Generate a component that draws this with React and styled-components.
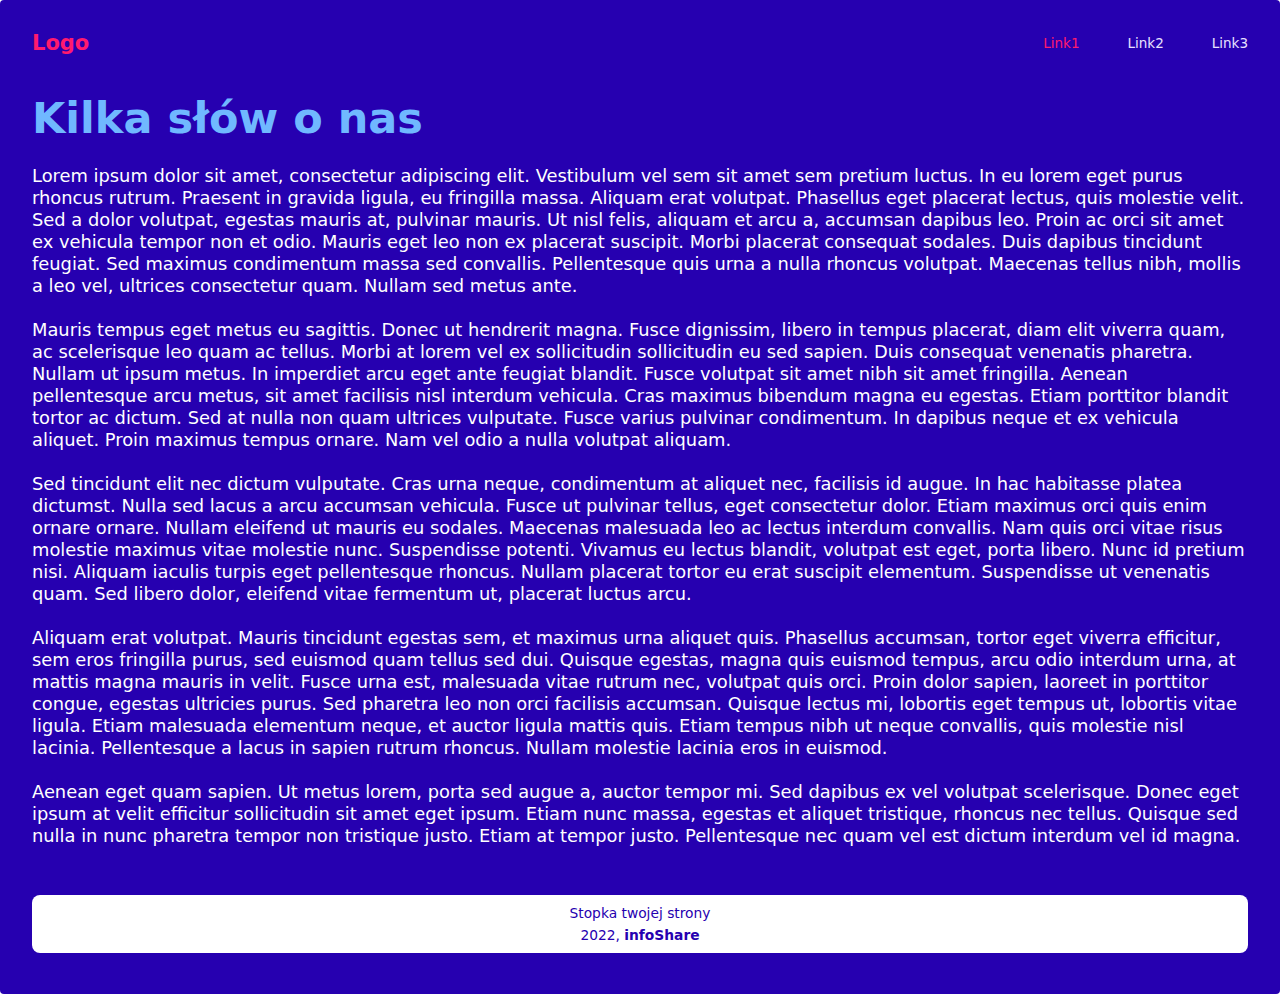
import styled, { createGlobalStyle } from "styled-components"

const GlobalStyle = createGlobalStyle`
  html, body {
    margin: 0;
    padding: 0;
    background: #ffffff;
  }

  body {
    font-family: "DejaVu Sans", "Open Sans", sans-serif;
  }

  * {
    box-sizing: border-box;
  }
`

const Page = styled.div`
  min-height: 994px;
  background: #2600b0;
  border-radius: 4px;
  padding: 0 32px 41px;
  display: flex;
  flex-direction: column;
`

const Header = styled.header`
  display: flex;
  justify-content: space-between;
  align-items: center;
  height: 86px;
`

const Logo = styled.a`
  color: #ff1a6e;
  font-size: 21px;
  font-weight: 700;
  text-decoration: none;
`

const Nav = styled.nav`
  display: flex;
  gap: 48px;
`

const NavLink = styled.a`
  color: ${(p) => (p.$active ? "#ff1a6e" : "#e6e0ff")};
  font-size: 13.5px;
  text-decoration: none;
`

const Main = styled.main`
  flex: 1;
`

const Title = styled.h1`
  margin: 0 0 15px;
  color: #70b8ff;
  font-size: 43px;
  font-weight: 700;
  line-height: 64px;
`

const Paragraph = styled.p`
  margin: 0 0 22px;
  color: #ffffff;
  font-size: 17.85px;
  line-height: 22px;
`

const Footer = styled.footer`
  margin-top: 26px;
  background: #ffffff;
  border-radius: 8px;
  padding: 7px 16px;
  text-align: center;
  color: #2600b0;
  font-size: 13.8px;
  line-height: 22px;

  strong {
    font-weight: 700;
  }
`

const paragraphs = [
  "Lorem ipsum dolor sit amet, consectetur adipiscing elit. Vestibulum vel sem sit amet sem pretium luctus. In eu lorem eget purus rhoncus rutrum. Praesent in gravida ligula, eu fringilla massa. Aliquam erat volutpat. Phasellus eget placerat lectus, quis molestie velit. Sed a dolor volutpat, egestas mauris at, pulvinar mauris. Ut nisl felis, aliquam et arcu a, accumsan dapibus leo. Proin ac orci sit amet ex vehicula tempor non et odio. Mauris eget leo non ex placerat suscipit. Morbi placerat consequat sodales. Duis dapibus tincidunt feugiat. Sed maximus condimentum massa sed convallis. Pellentesque quis urna a nulla rhoncus volutpat. Maecenas tellus nibh, mollis a leo vel, ultrices consectetur quam. Nullam sed metus ante.",
  "Mauris tempus eget metus eu sagittis. Donec ut hendrerit magna. Fusce dignissim, libero in tempus placerat, diam elit viverra quam, ac scelerisque leo quam ac tellus. Morbi at lorem vel ex sollicitudin sollicitudin eu sed sapien. Duis consequat venenatis pharetra. Nullam ut ipsum metus. In imperdiet arcu eget ante feugiat blandit. Fusce volutpat sit amet nibh sit amet fringilla. Aenean pellentesque arcu metus, sit amet facilisis nisl interdum vehicula. Cras maximus bibendum magna eu egestas. Etiam porttitor blandit tortor ac dictum. Sed at nulla non quam ultrices vulputate. Fusce varius pulvinar condimentum. In dapibus neque et ex vehicula aliquet. Proin maximus tempus ornare. Nam vel odio a nulla volutpat aliquam.",
  "Sed tincidunt elit nec dictum vulputate. Cras urna neque, condimentum at aliquet nec, facilisis id augue. In hac habitasse platea dictumst. Nulla sed lacus a arcu accumsan vehicula. Fusce ut pulvinar tellus, eget consectetur dolor. Etiam maximus orci quis enim ornare ornare. Nullam eleifend ut mauris eu sodales. Maecenas malesuada leo ac lectus interdum convallis. Nam quis orci vitae risus molestie maximus vitae molestie nunc. Suspendisse potenti. Vivamus eu lectus blandit, volutpat est eget, porta libero. Nunc id pretium nisi. Aliquam iaculis turpis eget pellentesque rhoncus. Nullam placerat tortor eu erat suscipit elementum. Suspendisse ut venenatis quam. Sed libero dolor, eleifend vitae fermentum ut, placerat luctus arcu.",
  "Aliquam erat volutpat. Mauris tincidunt egestas sem, et maximus urna aliquet quis. Phasellus accumsan, tortor eget viverra efficitur, sem eros fringilla purus, sed euismod quam tellus sed dui. Quisque egestas, magna quis euismod tempus, arcu odio interdum urna, at mattis magna mauris in velit. Fusce urna est, malesuada vitae rutrum nec, volutpat quis orci. Proin dolor sapien, laoreet in porttitor congue, egestas ultricies purus. Sed pharetra leo non orci facilisis accumsan. Quisque lectus mi, lobortis eget tempus ut, lobortis vitae ligula. Etiam malesuada elementum neque, et auctor ligula mattis quis. Etiam tempus nibh ut neque convallis, quis molestie nisl lacinia. Pellentesque a lacus in sapien rutrum rhoncus. Nullam molestie lacinia eros in euismod.",
  "Aenean eget quam sapien. Ut metus lorem, porta sed augue a, auctor tempor mi. Sed dapibus ex vel volutpat scelerisque. Donec eget ipsum at velit efficitur sollicitudin sit amet eget ipsum. Etiam nunc massa, egestas et aliquet tristique, rhoncus nec tellus. Quisque sed nulla in nunc pharetra tempor non tristique justo. Etiam at tempor justo. Pellentesque nec quam vel est dictum interdum vel id magna.",
]

export default function App() {
  return (
    <>
      <GlobalStyle />
      <Page>
        <Header>
          <Logo href="#">Logo</Logo>
          <Nav>
            <NavLink href="#" $active>
              Link1
            </NavLink>
            <NavLink href="#">Link2</NavLink>
            <NavLink href="#">Link3</NavLink>
          </Nav>
        </Header>
        <Main>
          <Title>Kilka słów o nas</Title>
          {paragraphs.map((text, i) => (
            <Paragraph key={i}>{text}</Paragraph>
          ))}
        </Main>
        <Footer>
          <div>Stopka twojej strony</div>
          <div>
            2022, <strong>infoShare</strong>
          </div>
        </Footer>
      </Page>
    </>
  )
}
